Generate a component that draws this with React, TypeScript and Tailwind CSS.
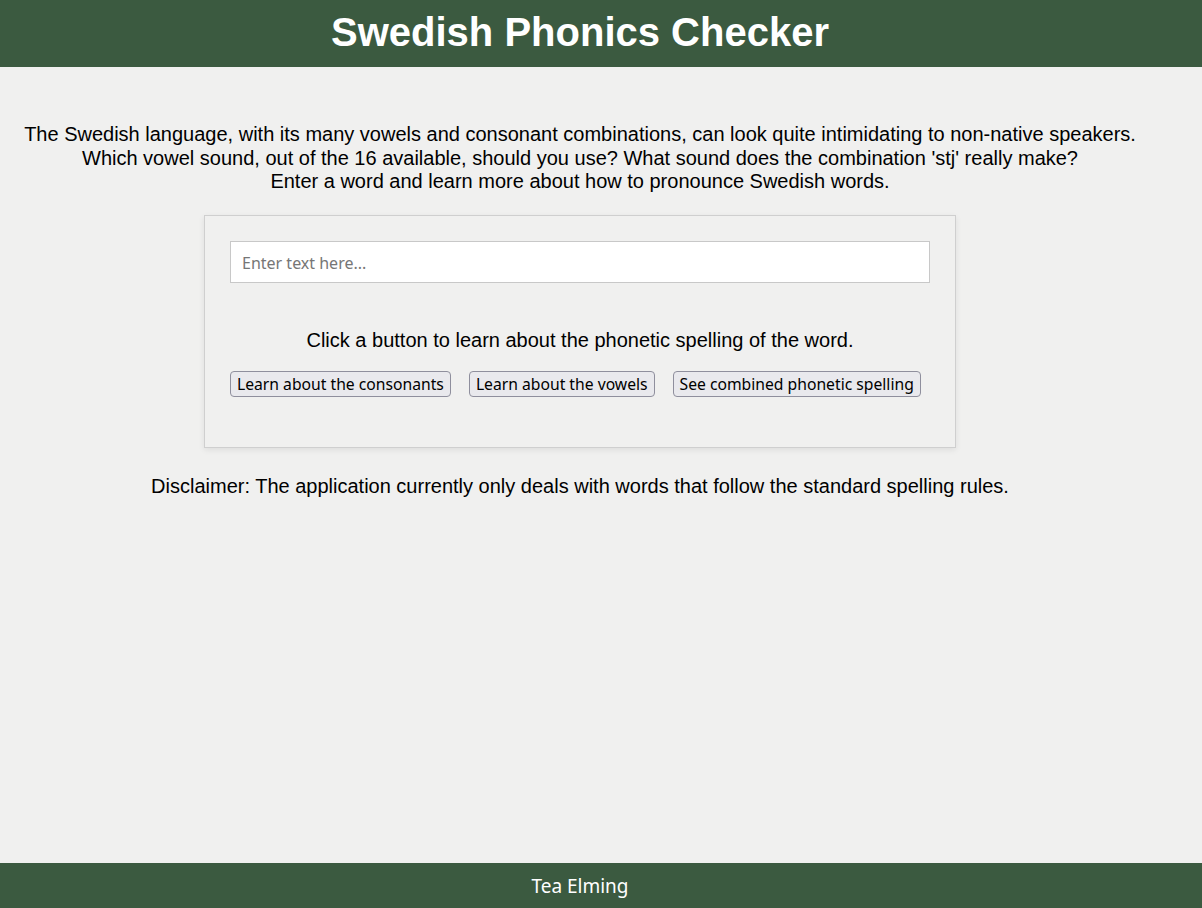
import React, { useState } from "react";

const buttons = [
  "Learn about the consonants",
  "Learn about the vowels",
  "See combined phonetic spelling",
];

export default function App() {
  const [word, setWord] = useState("");

  return (
    <div className="min-h-screen flex flex-col bg-[#f0f0ef] font-['Liberation_Sans',Arial,sans-serif] text-black">
      <header className="h-[67px] bg-[#3b5a40] flex items-center pb-[3px]">
        <h1 className="w-[1160px] text-center text-[40px] font-bold text-white leading-none">
          Swedish Phonics Checker
        </h1>
      </header>

      <main className="flex-1 w-[1160px] flex flex-col items-center">
        <p className="mt-[56px] text-center text-[20px] leading-[23.5px]">
          The Swedish language, with its many vowels and consonant combinations, can look quite intimidating to non-native speakers.
          <br />
          Which vowel sound, out of the 16 available, should you use? What sound does the combination 'stj' really make?
          <br />
          Enter a word and learn more about how to pronounce Swedish words.
        </p>

        <div className="mt-[21px] w-[752px] border border-[#cfcfcf] shadow-[0_2px_6px_rgba(0,0,0,0.08)] px-[25px] pt-[25px] pb-[50px] flex flex-col">
          <input
            value={word}
            onChange={(e) => setWord(e.target.value)}
            placeholder="Enter text here..."
            className="h-[42px] w-full bg-white border border-[#c8c8c8] px-[11px] pt-[2px] text-[16px] font-['Noto_Sans',sans-serif] placeholder:text-[#767676] outline-none"
          />
          <p className="mt-[46px] text-center text-[20px] leading-[23px]">
            Click a button to learn about the phonetic spelling of the word.
          </p>
          <div className="mt-[19px] flex gap-[18px]">
            {buttons.map((b) => (
              <button
                key={b}
                className="h-[26px] px-[6px] pt-[2px] rounded-[4px] border border-[#8f8f9d] bg-[#e9e9ed] text-[15.7px] leading-none font-['Noto_Sans',sans-serif] text-black"
              >
                {b}
              </button>
            ))}
          </div>
        </div>

        <p className="mt-[27px] text-center text-[20px] leading-[23px]">
          Disclaimer: The application currently only deals with words that follow the standard spelling rules.
        </p>
      </main>

      <footer className="h-[45px] bg-[#3b5a40] flex items-center pt-[2px]">
        <span className="w-[1160px] text-center text-white text-[19px] font-['Noto_Sans',sans-serif]">
          Tea Elming
        </span>
      </footer>
    </div>
  );
}
